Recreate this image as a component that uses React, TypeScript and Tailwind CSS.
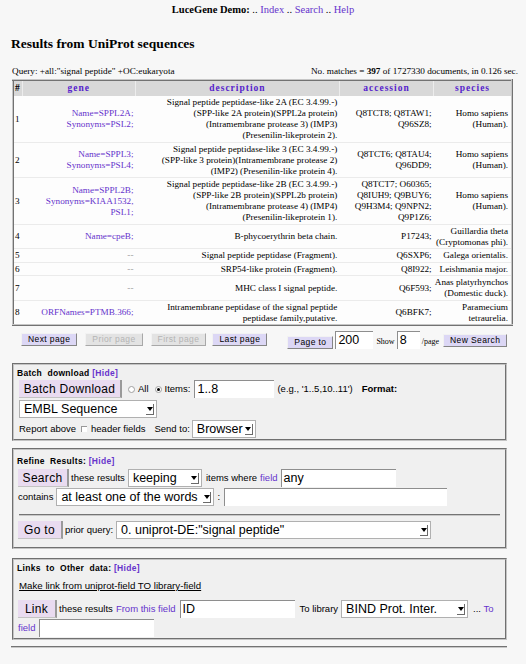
import React from "react"

type Row = {
  n: number
  gene: string[]
  desc: string[]
  acc: string[]
  species: string[]
}

const rows: Row[] = [
  {
    n: 1,
    gene: ["Name=SPPL2A;", "Synonyms=PSL2;"],
    desc: [
      "Signal peptide peptidase-like 2A (EC 3.4.99.-)",
      "(SPP-like 2A protein)(SPPL2a protein)",
      "(Intramembrane protease 3) (IMP3)",
      "(Presenilin-likeprotein 2).",
    ],
    acc: ["Q8TCT8; Q8TAW1;", "Q96SZ8;"],
    species: ["Homo sapiens", "(Human)."],
  },
  {
    n: 2,
    gene: ["Name=SPPL3;", "Synonyms=PSL4;"],
    desc: [
      "Signal peptide peptidase-like 3 (EC 3.4.99.-)",
      "(SPP-like 3 protein)(Intramembrane protease 2)",
      "(IMP2) (Presenilin-like protein 4).",
    ],
    acc: ["Q8TCT6; Q8TAU4;", "Q96DD9;"],
    species: ["Homo sapiens", "(Human)."],
  },
  {
    n: 3,
    gene: ["Name=SPPL2B;", "Synonyms=KIAA1532,", "PSL1;"],
    desc: [
      "Signal peptide peptidase-like 2B (EC 3.4.99.-)",
      "(SPP-like 2B protein)(SPPL2b protein)",
      "(Intramembrane protease 4) (IMP4)",
      "(Presenilin-likeprotein 1).",
    ],
    acc: ["Q8TCT7; O60365;", "Q8IUH9; Q9BUY6;", "Q9H3M4; Q9NPN2;", "Q9P1Z6;"],
    species: ["Homo sapiens", "(Human)."],
  },
  {
    n: 4,
    gene: ["Name=cpeB;"],
    desc: ["B-phycoerythrin beta chain."],
    acc: ["P17243;"],
    species: ["Guillardia theta", "(Cryptomonas phi)."],
  },
  {
    n: 5,
    gene: [],
    desc: ["Signal peptide peptidase (Fragment)."],
    acc: ["Q6SXP6;"],
    species: ["Galega orientalis."],
  },
  {
    n: 6,
    gene: [],
    desc: ["SRP54-like protein (Fragment)."],
    acc: ["Q8I922;"],
    species: ["Leishmania major."],
  },
  {
    n: 7,
    gene: [],
    desc: ["MHC class I signal peptide."],
    acc: ["Q6F593;"],
    species: ["Anas platyrhynchos", "(Domestic duck)."],
  },
  {
    n: 8,
    gene: ["ORFNames=PTMB.366;"],
    desc: ["Intramembrane peptidase of the signal peptide", "peptidase family,putative."],
    acc: ["Q6BFK7;"],
    species: ["Paramecium", "tetraurelia."],
  },
]

function Lines({ items }: { items: string[] }) {
  return (
    <>
      {items.map((l, i) => (
        <div key={i} className="whitespace-nowrap">{l}</div>
      ))}
    </>
  )
}

type P = { children?: React.ReactNode; className?: string }

function PageBtn({ children, disabled, className = "" }: P & { disabled?: boolean }) {
  return (
    <span
      className={
        (disabled
          ? "flex h-[13px] shrink-0 items-center justify-center border border-t-[#f2f2f2] border-l-[#f2f2f2] border-r-[#a8a8a8] border-b-[#a8a8a8] bg-[#e3e3e3] px-[6px] font-['Liberation_Sans',sans-serif] text-[8.5px] leading-none tracking-[0.4px] text-[#b4b4b4] "
          : "flex h-[13px] shrink-0 items-center justify-center border border-t-[#f2f2f2] border-l-[#f2f2f2] border-r-[#858585] border-b-[#858585] bg-[#dcd7f5] px-[6px] font-['Liberation_Sans',sans-serif] text-[8.5px] leading-none tracking-[0.4px] text-black ") + className
      }
    >
      {children}
    </span>
  )
}

function BigBtn({ children, className = "" }: P) {
  return (
    <span
      className={`flex h-[18px] shrink-0 items-center justify-center border-r-2 border-b border-r-[#9a9a9a] border-b-[#c4c4c4] bg-[#e9dbf0] text-[12px] leading-none tracking-[0.3px] text-black ${className}`}
    >
      {children}
    </span>
  )
}

function TextBox({ children, className = "" }: P) {
  return (
    <span
      className={`flex h-[18px] shrink-0 items-center overflow-hidden border-t border-l border-t-[#8e8e8e] border-l-[#8e8e8e] bg-white pl-[2px] font-['Liberation_Sans',sans-serif] text-[12.5px] leading-none text-black ${className}`}
    >
      {children}
    </span>
  )
}

function SelectBox({ children, className = "" }: P) {
  return (
    <span
      className={`flex h-[18px] shrink-0 items-center justify-between border border-[#b0b0b0] bg-white pl-[4px] pr-[2px] text-[12.5px] leading-none text-black ${className}`}
    >
      <span className="whitespace-nowrap">{children}</span>
      <span className="flex h-[11px] w-[8px] items-center justify-center border-r border-b border-[#6a6a6a] bg-white">
        <svg width="6" height="4" viewBox="0 0 6 4">
          <path d="M0 0h6L3 4z" fill="#000" />
        </svg>
      </span>
    </span>
  )
}

function Radio({ checked, className = "" }: { checked?: boolean; className?: string }) {
  return (
    <span
      className={`flex h-[7px] w-[7px] shrink-0 items-center justify-center rounded-full border border-[#a0a0a0] bg-white ${className}`}
    >
      {checked && <span className="h-[3px] w-[3px] rounded-full bg-black" />}
    </span>
  )
}

function PanelTitle({ children }: P) {
  return (
    <div className="text-[8.5px] font-bold leading-[11px] tracking-[0.3px] text-black">
      {children} <span className="text-[#6633cc]">[Hide]</span>
    </div>
  )
}

const panel =
  "ml-[12px] w-[495px] border-2 border-[#c4c4c4] bg-[#f0f0f0] px-[3px] [border-style:groove]"

export default function App() {
  return (
    <div className="min-h-screen bg-[#f7f7f7] pb-[20px] font-['Liberation_Serif',serif] text-black">
      <div className="pt-[4px] text-center text-[10.5px] leading-[12px]">
        <b>LuceGene Demo:</b> .. <a className="text-[#6633cc]">Index</a> ..{" "}
        <a className="text-[#6633cc]">Search</a> .. <a className="text-[#6633cc]">Help</a>
      </div>

      <h1 className="ml-[11px] mt-[20px] text-[13.5px] font-bold leading-[16px]">
        Results from UniProt sequences
      </h1>

      <div className="ml-[12px] mr-[8px] mt-[14px] flex justify-between text-[9.2px] leading-[11px]">
        <span>Query: +all:"signal peptide" +OC:eukaryota</span>
        <span>
          No. matches = <b>397</b> of 1727330 documents, in 0.126 sec.
        </span>
      </div>

      <table className="ml-[12px] mt-[2px] w-[501px] table-fixed border-2 border-[#c6c6c6] bg-[#fdfdfd] text-[9.2px] leading-[11px] [border-style:inset]">
        <colgroup>
          <col className="w-[9px]" />
          <col className="w-[113px]" />
          <col className="w-[203px]" />
          <col className="w-[94px]" />
          <col className="w-[78px]" />
        </colgroup>
        <thead>
          <tr className="h-[16px] bg-[#d8d8d8] text-[9.5px] font-bold tracking-[1px] text-[#5522cc]">
            <th className="border-r border-[#ececec] pl-[1px] text-left text-black">#</th>
            <th className="border-r border-[#ececec]">gene</th>
            <th className="border-r border-[#ececec]">description</th>
            <th className="border-r border-[#ececec]">accession</th>
            <th>species</th>
          </tr>
        </thead>
        <tbody>
          {rows.map((r, i) => (
            <tr
              key={r.n}
              className={i < rows.length - 1 ? "border-b border-[#ebebeb] align-middle" : "align-middle"}
            >
              <td className="pt-px pb-[0.5px] pl-[1px]">{r.n}</td>
              <td className="pt-px pb-[0.5px] pr-[2px] text-right text-[#6633cc]">
                {r.gene.length ? <Lines items={r.gene} /> : <span className="text-[#999]">--</span>}
              </td>
              <td className="pt-px pb-[0.5px] pr-[2px] text-right">
                <Lines items={r.desc} />
              </td>
              <td className="pt-px pb-[0.5px] pr-[2px] text-right">
                <Lines items={r.acc} />
              </td>
              <td className="pt-px pb-[0.5px] pr-[3px] text-right">
                <Lines items={r.species} />
              </td>
            </tr>
          ))}
        </tbody>
      </table>

      <div className="ml-[21px] mt-[4px] flex h-[19px] items-center">
        <PageBtn>Next page</PageBtn>
        <PageBtn disabled className="ml-[8px]">Prior page</PageBtn>
        <PageBtn disabled className="ml-[8px]">First page</PageBtn>
        <PageBtn className="ml-[6px]">Last page</PageBtn>
        <PageBtn className="ml-[20px] mt-[6px]">Page to</PageBtn>
        <TextBox className="ml-[2px] w-[38px]">200</TextBox>
        <span className="ml-[3px] mt-[5px] text-[8px] leading-none">Show</span>
        <TextBox className="ml-[2px] w-[23px]">8</TextBox>
        <span className="ml-[2px] mt-[5px] text-[8px] leading-none">/page</span>
        <PageBtn className="ml-[4px] mt-[2px]">New Search</PageBtn>
      </div>

      <div className="font-['Liberation_Sans',sans-serif]">
        {/* batch download */}
        <div className={`${panel} mt-[14px] pt-[3px] pb-[1px]`}>
          <PanelTitle>Batch&nbsp; download</PanelTitle>
          <div className="ml-[2px] mt-[1px] flex items-center text-[9.5px] leading-none">
            <BigBtn className="w-[103px]">Batch Download</BigBtn>
            <Radio className="ml-[6px]" />
            <span className="ml-[3px]">All</span>
            <Radio checked className="ml-[6px]" />
            <span className="ml-[3px]">Items:</span>
            <TextBox className="ml-[4px] w-[80px]">1..8</TextBox>
            <span className="ml-[3px]">(e.g., '1..5,10..11')</span>
            <span className="ml-[9px] font-bold">Format:</span>
          </div>
          <div className="ml-[2px] mt-[2px] flex">
            <SelectBox className="w-[138px]">EMBL Sequence</SelectBox>
          </div>
          <div className="ml-[2px] mt-[2px] flex items-center text-[9.5px] leading-none">
            <span>Report above</span>
            <span className="ml-[5px] h-[6px] w-[6px] border-t border-l border-[#999] bg-white" />
            <span className="ml-[4px]">header fields</span>
            <span className="ml-[9px]">Send to:</span>
            <SelectBox className="ml-[2px] w-[64px]">Browser</SelectBox>
          </div>
        </div>

        {/* refine */}
        <div className={`${panel} mt-[7px] pt-[6px] pb-[8px]`}>
          <PanelTitle>Refine&nbsp; Results:</PanelTitle>
          <div className="ml-[1px] mt-[2px] flex items-center text-[9.5px] leading-none">
            <BigBtn className="w-[51px]">Search</BigBtn>
            <span className="ml-[2px]">these results</span>
            <SelectBox className="ml-[3px] w-[74px]">keeping</SelectBox>
            <span className="ml-[4px]">items where</span>
            <span className="ml-[3px] text-[#6633cc]">field</span>
            <TextBox className="ml-[3px] w-[115px]">any</TextBox>
          </div>
          <div className="ml-[1px] mt-[1px] flex items-center text-[9.5px] leading-none">
            <span>contains</span>
            <SelectBox className="ml-[3px] w-[158px]">at least one of the words</SelectBox>
            <span className="ml-[3px]">:</span>
            <TextBox className="ml-[4px] w-[223px]" />
          </div>
          <div className="mx-[2px] mt-[8px] border-t-2 border-[#c8c8c8] [border-style:groove]" />
          <div className="ml-[1px] mt-[5px] flex items-center text-[9.5px] leading-none">
            <BigBtn className="w-[45px]">Go to</BigBtn>
            <span className="ml-[2px]">prior query:</span>
            <SelectBox className="ml-[3px] w-[315px]">0. uniprot-DE:"signal peptide"</SelectBox>
          </div>
        </div>

        {/* links */}
        <div className={`${panel} mt-[9px] pt-[3px] pb-[1px]`}>
          <PanelTitle>Links&nbsp; to&nbsp; Other&nbsp; data:</PanelTitle>
          <div className="ml-[2px] mt-[6px] text-[9.7px] leading-[11px] underline">
            Make link from uniprot-field TO library-field
          </div>
          <div className="ml-[1px] mt-[9px] flex items-center text-[9.5px] leading-none">
            <BigBtn className="w-[39px]">Link</BigBtn>
            <span className="ml-[2px]">these results</span>
            <span className="ml-[3px] text-[#6633cc]">From this field</span>
            <TextBox className="ml-[4px] w-[115px]">ID</TextBox>
            <span className="ml-[5px]">To library</span>
            <SelectBox className="ml-[3px] w-[127px]">BIND Prot. Inter.</SelectBox>
            <span className="ml-[5px]">
              ... <span className="text-[#6633cc]">To</span>
            </span>
          </div>
          <div className="ml-[1px] mt-[1px] flex items-center text-[9.5px] leading-none">
            <span className="text-[#6633cc]">field</span>
            <TextBox className="ml-[4px] w-[115px]" />
          </div>
        </div>

        <div className="ml-[11px] mt-[6px] w-[496px] border-t-2 border-[#c8c8c8] [border-style:groove]" />
      </div>
    </div>
  )
}
